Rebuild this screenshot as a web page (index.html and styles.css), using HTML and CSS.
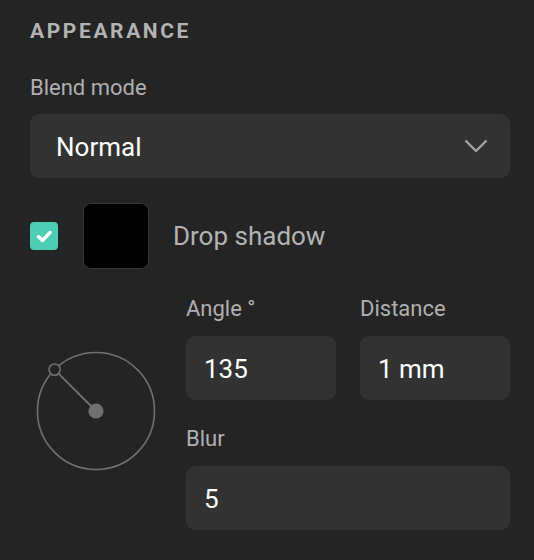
FILE: index.html
```html
<!DOCTYPE html>
<html>
<head>
<meta charset="utf-8">
<link rel="stylesheet" href="styles.css">
</head>
<body>
<div class="panel">
  <h2 class="title">APPEARANCE</h2>
  <div class="label blend-label">Blend mode</div>
  <div class="select">
    <span class="select-value">Normal</span>
    <svg class="chevron" width="24" height="14" viewBox="0 0 24 14"><path d="M1.5 1.5 L12 12 L22.5 1.5" fill="none" stroke="#a8a8a8" stroke-width="2.2"/></svg>
  </div>
  <div class="shadow-row">
    <div class="checkbox">
      <svg width="28" height="28" viewBox="0 0 28 28"><path d="M8.6 14.8 L12.5 18.4 L20 10.6" fill="none" stroke="#fff" stroke-width="3.6" stroke-linecap="round" stroke-linejoin="round"/></svg>
    </div>
    <div class="swatch"></div>
    <span class="shadow-label">Drop shadow</span>
  </div>
  <div class="shadow-settings">
    <div class="dial-col">
      <svg class="dial" width="124" height="124" viewBox="0 0 124 124">
        <circle cx="62" cy="62" r="58.5" fill="none" stroke="#707070" stroke-width="1.6"/>
        <line x1="62" y1="62" x2="24.6" y2="24.6" stroke="#707070" stroke-width="1.8"/>
        <circle cx="20.6" cy="20.6" r="5.6" fill="#242424" stroke="#707070" stroke-width="1.6"/>
        <circle cx="62" cy="62" r="7.6" fill="#707070"/>
      </svg>
    </div>
    <div class="fields">
      <div class="field">
        <div class="label">Angle °</div>
        <div class="input">135</div>
      </div>
      <div class="field">
        <div class="label">Distance</div>
        <div class="input">1 mm</div>
      </div>
      <div class="field wide">
        <div class="label">Blur</div>
        <div class="input">5</div>
      </div>
    </div>
  </div>
</div>
</body>
</html>
```
FILE: styles.css
```css
html, body {
  margin: 0;
  padding: 0;
  background: #242424;
}
body {
  font-family: Roboto, "Liberation Sans", sans-serif;
  width: 534px;
  height: 560px;
  overflow: hidden;
}
.panel {
  padding: 19px 24px 0 30px;
}
.title {
  margin: 0;
  font-size: 21px;
  line-height: 24px;
  font-weight: 700;
  letter-spacing: 2.6px;
  color: #b3b3b3;
}
.label {
  font-size: 22px;
  line-height: 26px;
  color: #b0b0b0;
  margin-bottom: 14px;
}
.blend-label {
  margin-top: 32px;
  margin-bottom: 13px;
}
.select {
  box-sizing: border-box;
  width: 480px;
  height: 64px;
  background: #323232;
  border-radius: 9px;
  display: flex;
  align-items: center;
  justify-content: space-between;
  padding: 0 22px 0 26px;
}
.select-value {
  font-size: 26px;
  color: #ffffff;
  padding-top: 2px;
}
.chevron {
  display: block;
}
.shadow-row {
  display: flex;
  align-items: center;
  margin-top: 25px;
  height: 66px;
}
.checkbox {
  width: 28px;
  height: 28px;
  border-radius: 4px;
  background: #4ecdb5;
  margin-right: 25px;
}
.checkbox svg {
  display: block;
}
.swatch {
  box-sizing: border-box;
  width: 66px;
  height: 66px;
  background: #000;
  border: 1.5px solid #363636;
  border-radius: 8px;
  margin-right: 24px;
}
.shadow-label {
  font-size: 26px;
  color: #b3b3b3;
}
.shadow-settings {
  display: grid;
  grid-template-columns: 132px 1fr;
  column-gap: 24px;
  align-items: center;
  margin-top: 27px;
  width: 480px;
}
.dial-col {
  display: flex;
  justify-content: center;
  padding-bottom: 4px;
}
.dial {
  display: block;
}
.fields {
  display: grid;
  grid-template-columns: 1fr 1fr;
  column-gap: 24px;
  row-gap: 26px;
}
.field.wide {
  grid-column: 1 / 3;
}
.input {
  box-sizing: border-box;
  height: 64px;
  background: #323232;
  border-radius: 9px;
  display: flex;
  align-items: center;
  padding: 2px 18px 0;
  font-size: 26px;
  color: #ffffff;
}
```
